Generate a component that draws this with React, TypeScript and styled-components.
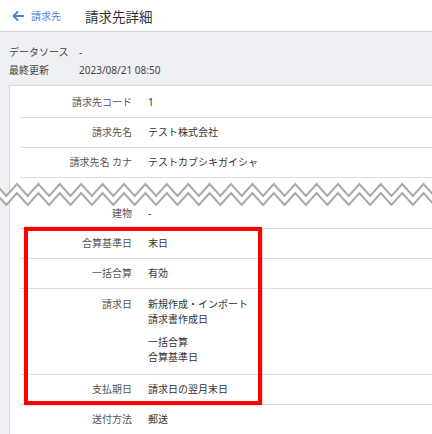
import React from "react";
import styled, { createGlobalStyle } from "styled-components";

const GlobalStyle = createGlobalStyle`
  html, body { margin: 0; padding: 0; }
  body {
    background: #eff0f4;
    font-family: "Noto Sans", "Noto Sans CJK JP", sans-serif;
    color: #333;
    overflow: hidden;
  }
  * { box-sizing: border-box; }
`;

const Header = styled.header`
  height: 32px;
  background: #fff;
  border-bottom: 1px solid #d6d6da;
  display: flex;
  align-items: center;
  padding-left: 12px;
`;

const BackLink = styled.a`
  display: flex;
  align-items: center;
  gap: 7px;
  color: #4f7fdc;
  font-size: 10px;
  text-decoration: none;
`;

const Title = styled.h1`
  margin: 0 0 0 24px;
  font-size: 13.5px;
  font-weight: 400;
  color: #333;
`;

const Meta = styled.div`
  padding: 11px 9px 0;
  display: grid;
  grid-template-columns: 70px 1fr;
  font-size: 10px;
  line-height: 18px;
  color: #444;
`;

const Card = styled.section`
  margin: 6px -10px 0 9px;
  background: #fff;
  border-top: 1px solid #d8d8dc;
  border-left: 1px solid #d8d8dc;
  padding-top: 2px;
`;

const Row = styled.div<{ $cut?: boolean; $tall?: boolean }>`
  margin-left: 10px;
  display: grid;
  grid-template-columns: 112px 1fr;
  column-gap: 16px;
  border-bottom: 1px solid #dcdce3;
  padding: ${(p) => (p.$cut ? "0 0 7px" : p.$tall ? "8px 0 9px" : "7px 0")};
  font-size: 10px;
  line-height: 15px;
`;

const Label = styled.div`
  text-align: right;
  color: #555;
`;

const Value = styled.div`
  color: #333;
  display: flex;
  flex-direction: column;
  gap: 8px;
`;

const Group = styled.div`
  position: relative;
`;

const Highlight = styled.div`
  position: absolute;
  top: -2px;
  bottom: 0;
  left: 14px;
  width: 238px;
  border: 4px solid #ff0000;
  box-shadow: 0 0 1px rgba(255, 0, 0, 0.6);
  pointer-events: none;
`;

const Tear = styled.div`
  margin-left: -10px;
  height: 28px;
  background: linear-gradient(
    to right,
    #eff0f4 0,
    #eff0f4 9px,
    #d8d8dc 9px,
    #d8d8dc 10px,
    #fff 10px
  );
  svg { display: block; }
`;

const PERIOD = 21.4;
const START = 17 - PERIOD;

function zig(top: number, amp: number, w: number) {
  const pts: string[] = [];
  for (let x = START - PERIOD; x < w + PERIOD; x += PERIOD / 2) {
    const i = Math.round((x - START) / (PERIOD / 2));
    const y = i % 2 === 0 ? top : top + amp;
    pts.push(`${x.toFixed(2)},${y}`);
  }
  return pts;
}

function TearLines() {
  const w = 442;
  const upper = zig(6, 12, w);
  const lower = zig(15, 12, w);
  const fill = [...upper, ...[...lower].reverse()].join(" ");
  return (
    <svg width={w} height={28} viewBox={`0 0 ${w} 28`}>
      <polygon points={fill} fill="#fff" />
      <polyline points={upper.join(" ")} fill="none" stroke="#a9a9a9" strokeWidth={2} />
      <polyline points={lower.join(" ")} fill="none" stroke="#a9a9a9" strokeWidth={2} />
    </svg>
  );
}

function ArrowLeft() {
  return (
    <svg width="12" height="10" viewBox="0 0 12 10">
      <path
        d="M11.5 5H1.5M5.5 1L1.5 5L5.5 9"
        fill="none"
        stroke="#4f7fdc"
        strokeWidth="1.8"
        strokeLinecap="round"
        strokeLinejoin="round"
      />
    </svg>
  );
}

export default function App() {
  return (
    <>
      <GlobalStyle />
      <Header>
        <BackLink href="#">
          <ArrowLeft />
          請求先
        </BackLink>
        <Title>請求先詳細</Title>
      </Header>
      <Meta>
        <span>データソース</span>
        <span>-</span>
        <span>最終更新</span>
        <span>2023/08/21 08:50</span>
      </Meta>
      <Card>
        <Row>
          <Label>請求先コード</Label>
          <Value>1</Value>
        </Row>
        <Row>
          <Label>請求先名</Label>
          <Value>テスト株式会社</Value>
        </Row>
        <Row>
          <Label>請求先名 カナ</Label>
          <Value>テストカブシキガイシャ</Value>
        </Row>
        <Tear>
          <TearLines />
        </Tear>
        <Row $cut>
          <Label>建物</Label>
          <Value>-</Value>
        </Row>
        <Group>
          <Row>
            <Label>合算基準日</Label>
            <Value>末日</Value>
          </Row>
          <Row>
            <Label>一括合算</Label>
            <Value>有効</Value>
          </Row>
          <Row $tall>
            <Label>請求日</Label>
            <Value>
              <div>
                新規作成・インポート
                <br />
                請求書作成日
              </div>
              <div>
                一括合算
                <br />
                合算基準日
              </div>
            </Value>
          </Row>
          <Row>
            <Label>支払期日</Label>
            <Value>請求日の翌月末日</Value>
          </Row>
          <Highlight />
        </Group>
        <Row>
          <Label>送付方法</Label>
          <Value>郵送</Value>
        </Row>
      </Card>
    </>
  );
}
